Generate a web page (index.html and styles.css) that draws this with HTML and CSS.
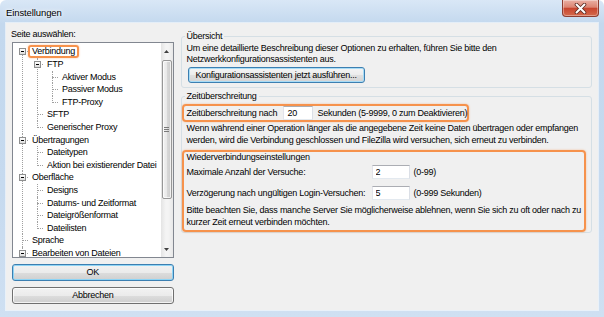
FILE: index.html
```html
<!DOCTYPE html>
<html lang="de">
  <head>
    <meta charset="UTF-8" />
    <title>Einstellungen</title>
    <link rel="stylesheet" href="styles.css">
  </head>
  <body>
    <div class="window">
      <div class="titlebar">
        <span class="title">Einstellungen</span>
        <span class="close">
          <svg width="13" height="11" viewBox="0 0 13 11">
            <path d="M2.5 1.5 L10.5 9.5 M10.5 1.5 L2.5 9.5" stroke="#5a2a22" stroke-width="3.6" stroke-linecap="round" />
            <path d="M2.5 1.5 L10.5 9.5 M10.5 1.5 L2.5 9.5" stroke="#fff" stroke-width="2" stroke-linecap="round" />
          </svg>
        </span>
      </div>

      <div class="client">
        <!-- page list on the left -->
        <div class="side">
          <div class="side-label">Seite auswählen:</div>
          <div class="treebox">
            <div class="tree-list">
              <ul class="tree">
                <li><span class="exp"></span><span class="node selected">Verbindung</span>
                  <ul>
                    <li><span class="exp"></span><span class="node">FTP</span>
                      <ul>
                        <li><span class="node">Aktiver Modus</span></li>
                        <li><span class="node">Passiver Modus</span></li>
                        <li><span class="node">FTP-Proxy</span></li>
                      </ul>
                    </li>
                    <li><span class="node">SFTP</span></li>
                    <li><span class="node">Generischer Proxy</span></li>
                  </ul>
                </li>
                <li><span class="exp"></span><span class="node">Übertragungen</span>
                  <ul>
                    <li><span class="node">Dateitypen</span></li>
                    <li><span class="node">Aktion bei existierender Datei</span></li>
                  </ul>
                </li>
                <li><span class="exp"></span><span class="node">Oberfläche</span>
                  <ul>
                    <li><span class="node">Designs</span></li>
                    <li><span class="node">Datums- und Zeitformat</span></li>
                    <li><span class="node">Dateigrößenformat</span></li>
                    <li><span class="node">Dateilisten</span></li>
                  </ul>
                </li>
                <li><span class="node">Sprache</span></li>
                <!-- list goes on below the visible part -->
                <li class="cont"><span class="exp"></span><span class="node">Bearbeiten von Dateien</span></li>
              </ul>
            </div>
            <div class="scrollbar">
              <div class="sb-arrow">
                <svg width="5" height="3" viewBox="0 0 5 3"><polygon points="0,3 2.5,0 5,3" fill="#404040" /></svg>
              </div>
              <div class="sb-track">
                <div class="sb-thumb"><span class="grip"></span></div>
              </div>
              <div class="sb-arrow">
                <svg width="5" height="3" viewBox="0 0 5 3"><polygon points="0,0 2.5,3 5,0" fill="#404040" /></svg>
              </div>
            </div>
          </div>
          <button class="btn btn-default">OK</button>
          <button class="btn">Abbrechen</button>
        </div>

        <!-- settings page -->
        <div class="main">
          <fieldset class="group">
            <legend>Übersicht</legend>
            <p class="text">Um eine detaillierte Beschreibung dieser Optionen zu erhalten, führen Sie bitte den<br>Netzwerkkonfigurationsassistenten aus.</p>
            <button class="btn btn-default btn-wizard">Konfigurationsassistenten jetzt ausführen...</button>
          </fieldset>

          <fieldset class="group group-timeout">
            <legend>Zeitüberschreitung</legend>
            <div class="row mark timeout">
              <span>Zeitüberschreitung nach</span>
              <input class="field field-timeout" value="20">
              <span>Sekunden (5-9999, 0 zum Deaktivieren)</span>
            </div>
            <p class="text text-after">Wenn während einer Operation länger als die angegebene Zeit keine Daten übertragen oder empfangen<br>werden, wird die Verbindung geschlossen und FileZilla wird versuchen, sich erneut zu verbinden.</p>

            <div class="mark reconnect">
              <div class="subtitle">Wiederverbindungseinstellungen</div>
              <div class="row">
                <span class="row-label">Maximale Anzahl der Versuche:</span>
                <input class="field" value="2">
                <span class="hint">(0-99)</span>
              </div>
              <div class="row row-second">
                <span class="row-label">Verzögerung nach ungültigen Login-Versuchen:</span>
                <input class="field" value="5">
                <span class="hint">(0-999 Sekunden)</span>
              </div>
              <p class="text text-note">Bitte beachten Sie, dass manche Server Sie möglicherweise ablehnen, wenn Sie sich zu oft oder nach zu<br>kurzer Zeit erneut verbinden möchten.</p>
            </div>
          </fieldset>
        </div>
      </div>
    </div>
  </body>
</html>
```

FILE: styles.css
```css
* {
  box-sizing: border-box;
}

body {
  margin: 0;
  background: #fff;
  font-family: "Liberation Sans", Arial, sans-serif;
  font-size: 9px;
  letter-spacing: -0.25px;
  color: #000;
}

/* window frame */

.window {
  width: 604px;
  height: 317px;
  display: flex;
  flex-direction: column;
  padding: 0 6px 7px 6px;
  background: linear-gradient(to bottom, #d9e7f6 0, #c3d8ee 24px, #c6daef 60%, #cfe0f2 100%);
  border-radius: 6px 6px 0 0;
}

.titlebar {
  height: 23px;
  flex: none;
  display: flex;
  justify-content: space-between;
  align-items: flex-start;
}

.title {
  padding-top: 7px;
  line-height: 12px;
  font-size: 9.5px;
  letter-spacing: -0.1px;
  text-shadow: 0 0 6px #fff, 0 0 3px #fff;
}

.close {
  width: 37px;
  height: 17px;
  margin-right: -1px;
  display: flex;
  align-items: center;
  justify-content: center;
  border: 1px solid #8d3d31;
  border-top: 0;
  border-radius: 0 0 4px 4px;
  background: linear-gradient(to bottom, #eab0a4 0, #dc8472 45%, #c8452f 52%, #d46a4c 100%);
  box-shadow: inset 0 0 0 1px rgba(255, 255, 255, 0.35);
}

.client {
  flex: 1;
  display: flex;
  gap: 7px;
  padding: 5px 6px 6px 6px;
  background: #f0f0f0;
  box-shadow: 0 0 0 1px rgba(255, 255, 255, 0.55);
}

/* left column */

.side {
  width: 162px;
  display: flex;
  flex-direction: column;
}

.side-label {
  line-height: 12px;
  margin-left: -1px;
}

.treebox {
  height: 216px;
  margin-top: 2px;
  display: flex;
  border: 1px solid #828790;
  background: #fff;
}

.tree-list {
  flex: 1;
  overflow: hidden;
  padding-top: 2.4px;
}

.tree,
.tree ul {
  list-style: none;
  margin: 0;
  padding: 0;
}

.tree li {
  position: relative;
  padding-left: 15px;
  line-height: 12.6px;
  white-space: nowrap;
}

.tree li::before {
  content: "";
  position: absolute;
  left: 9px;
  top: 0;
  bottom: 0;
  border-left: 1px dotted #a0a0a0;
}

.tree > li:first-child::before {
  top: 6px;
}

.tree li:last-child::before {
  bottom: auto;
  height: 7px;
}

.tree > li.cont::before {
  height: auto;
  bottom: -4px;
}

.tree li::after {
  content: "";
  position: absolute;
  left: 9px;
  top: 6px;
  width: 6px;
  border-top: 1px dotted #a0a0a0;
}

.node {
  display: inline-block;
  vertical-align: top;
  height: 12.6px;
  padding: 0 4px;
}

.node.selected {
  border-radius: 3px;
  box-shadow: inset 0 0 0 2px #f6924c, 0 0 2px rgba(246, 146, 76, 0.6);
}

.exp {
  position: absolute;
  z-index: 1;
  left: 6px;
  top: 3px;
  width: 7px;
  height: 7px;
  border: 1px solid #8e8f8f;
  background: linear-gradient(to bottom, #fff, #dcdcdc);
}

.exp::after {
  content: "";
  position: absolute;
  left: 1px;
  top: 2px;
  width: 3px;
  height: 1px;
  background: #000;
}

.scrollbar {
  width: 12px;
  display: flex;
  flex-direction: column;
  background: linear-gradient(to right, #e4e4e4, #f4f4f4 40%, #f4f4f4 60%, #e8e8e8);
}

.sb-arrow {
  height: 16px;
  display: flex;
  align-items: center;
  justify-content: center;
}

.sb-arrow svg {
  display: block;
}

.sb-track {
  flex: 1;
  padding: 1px 1px 0 1px;
}

.sb-thumb {
  height: 139px;
  display: flex;
  align-items: center;
  justify-content: center;
  border: 1px solid #979797;
  border-radius: 2px;
  background: linear-gradient(to right, #f3f3f3, #e8e8e8 50%, #d8d8d8 51%, #cdcdcd);
  box-shadow: inset 0 0 0 1px rgba(255, 255, 255, 0.7);
}

.grip {
  width: 5px;
  height: 5px;
  background: repeating-linear-gradient(to bottom, #7a7a7a 0, #7a7a7a 1px, transparent 1px, transparent 2px);
}

/* buttons */

.btn {
  display: block;
  width: 100%;
  height: 17px;
  margin-top: 6px;
  padding: 0;
  border: 1px solid #707070;
  border-radius: 3px;
  background: linear-gradient(to bottom, #f2f2f2 0, #ebebeb 50%, #dddddd 51%, #cfcfcf 100%);
  box-shadow: inset 0 0 0 1px rgba(255, 255, 255, 0.75);
  font: inherit;
  line-height: 15px;
  letter-spacing: inherit;
  color: #000;
}

.btn-default {
  border-color: #3c7fb1;
  box-shadow: inset 0 0 0 1px #8ed4f5;
}

.btn-wizard {
  width: auto;
  height: 16px;
  margin: 1.5px 0 0 1px;
  padding: 0 7px;
  line-height: 14px;
  background: linear-gradient(to bottom, #f4f4f4 0, #ececec 50%, #e0e0e0 51%, #d3d3d3 100%);
  box-shadow: inset 0 0 0 1px #a8dcf6;
}

/* right column */

.main {
  flex: 1;
  padding-top: 2px;
}

.group {
  margin: 0;
  padding: 1px 5px 4px 5px;
  border: 1px solid #d5dfe5;
  border-radius: 3px;
}

.group legend {
  padding: 0 2px;
  margin-left: -2px;
  line-height: 12px;
}

.group-timeout {
  margin-top: 2px;
  padding-top: 2px;
  padding-bottom: 0;
}

.text {
  margin: 0;
  line-height: 11.4px;
  white-space: nowrap;
}

.text-after {
  margin-top: 1px;
}

.text-note {
  margin-top: 5px;
}

.mark {
  border: 2px solid #f6924c;
  border-radius: 4px;
  box-shadow: 0 0 2px rgba(246, 146, 76, 0.6);
}

.row {
  display: flex;
  align-items: center;
  height: 14px;
  white-space: nowrap;
}

.timeout {
  height: 18px;
  width: 287px;
  margin-left: -5px;
  padding: 0 3px;
}

.timeout .field {
  margin: 0 4px 0 6px;
}

.reconnect {
  margin: 4px 0 0 -5px;
  padding: 0 3px 2px 3px;
}

.subtitle {
  line-height: 10px;
}

.reconnect .row {
  margin-top: 3px;
}

.reconnect .row-second {
  margin-top: 7px;
}

.row-label {
  width: 185px;
}

.field {
  width: 38px;
  height: 14px;
  padding: 0 3px;
  border: 1px solid #abadb3;
  border-color: #abadb3 #dbdfe6 #e3e9ef #e2e3ea;
  background: #fff;
  font: inherit;
  letter-spacing: inherit;
  color: #000;
}

.field-timeout {
  width: 30px;
}

.hint {
  margin-left: 4px;
}
```
